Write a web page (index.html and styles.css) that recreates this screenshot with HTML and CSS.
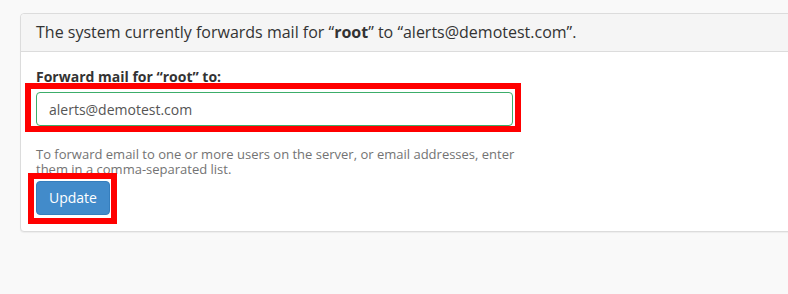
FILE: index.html
```html
<!DOCTYPE html>
<html>
<head>
<meta charset="utf-8">
<link rel="stylesheet" href="styles.css">
</head>
<body>
<div class="panel">
  <div class="panel-heading">The system currently forwards mail for “<b>root</b>” to “alerts@demotest.com”.</div>
  <div class="panel-body">
    <label class="field-label" for="fwd">Forward mail for “root” to:</label>
    <div class="input-wrap">
      <input id="fwd" class="form-control" type="text" value="alerts@demotest.com">
      <span class="mark mark-input"></span>
    </div>
    <p class="help">To forward email to one or more users on the server, or email addresses, enter them in a comma-separated list.</p>
    <div class="btn-wrap">
      <button class="btn">Update</button>
      <span class="mark mark-btn"></span>
    </div>
  </div>
</div>
</body>
</html>
```

FILE: styles.css
```css
html, body {
  margin: 0;
  padding: 0;
  background: #f9f9f9;
  overflow: hidden;
  height: 294px;
}
body {
  padding: 13px 0 0 20px;
  font-family: "Open Sans", "Liberation Sans", sans-serif;
  color: #333;
}
.panel {
  background: #fff;
  border: 1px solid #dcdcdc;
  border-radius: 4px;
  margin-right: -30px;
  box-shadow: 0 1px 1px rgba(0,0,0,0.05);
}
.panel-heading {
  background: #f5f5f5;
  border-bottom: 1px solid #dcdcdc;
  border-radius: 4px 4px 0 0;
  padding: 7px 15px;
  font-size: 16px;
  line-height: 23px;
  color: #333;
}
.panel-heading b { font-weight: 700; }
.panel-body {
  padding: 15px 15px 16px;
}
.field-label {
  display: block;
  font-size: 14px;
  font-weight: 700;
  line-height: 20px;
  margin-bottom: 5px;
  color: #333;
}
.input-wrap {
  position: relative;
  width: 477px;
}
.form-control {
  display: block;
  box-sizing: border-box;
  width: 477px;
  height: 34px;
  padding: 6px 12px;
  font-family: "Open Sans", "Liberation Sans", sans-serif;
  font-size: 14px;
  color: #555;
  background: #fff;
  border: 1px solid #3cad6a;
  border-radius: 4px;
  outline: none;
  margin: 0;
}
.help {
  width: 480px;
  margin: 21px 0 0;
  font-size: 13px;
  line-height: 15px;
  color: #737373;
}
.btn-wrap {
  position: relative;
  display: inline-block;
  vertical-align: top;
  margin-top: 4px;
}
.btn {
  display: block;
  box-sizing: border-box;
  height: 34px;
  padding: 6px 12px;
  font-family: "Open Sans", "Liberation Sans", sans-serif;
  font-size: 14px;
  line-height: 20px;
  color: #fff;
  background: #428bca;
  border: 1px solid #357ebd;
  border-radius: 4px;
}
.mark {
  position: absolute;
  border: 6px solid #ff0000;
  box-sizing: border-box;
  pointer-events: none;
}
.mark-input {
  left: -11px;
  top: -9px;
  width: 496px;
  height: 49px;
}
.mark-btn {
  left: -8px;
  top: -8px;
  width: 89px;
  height: 51px;
}
```
